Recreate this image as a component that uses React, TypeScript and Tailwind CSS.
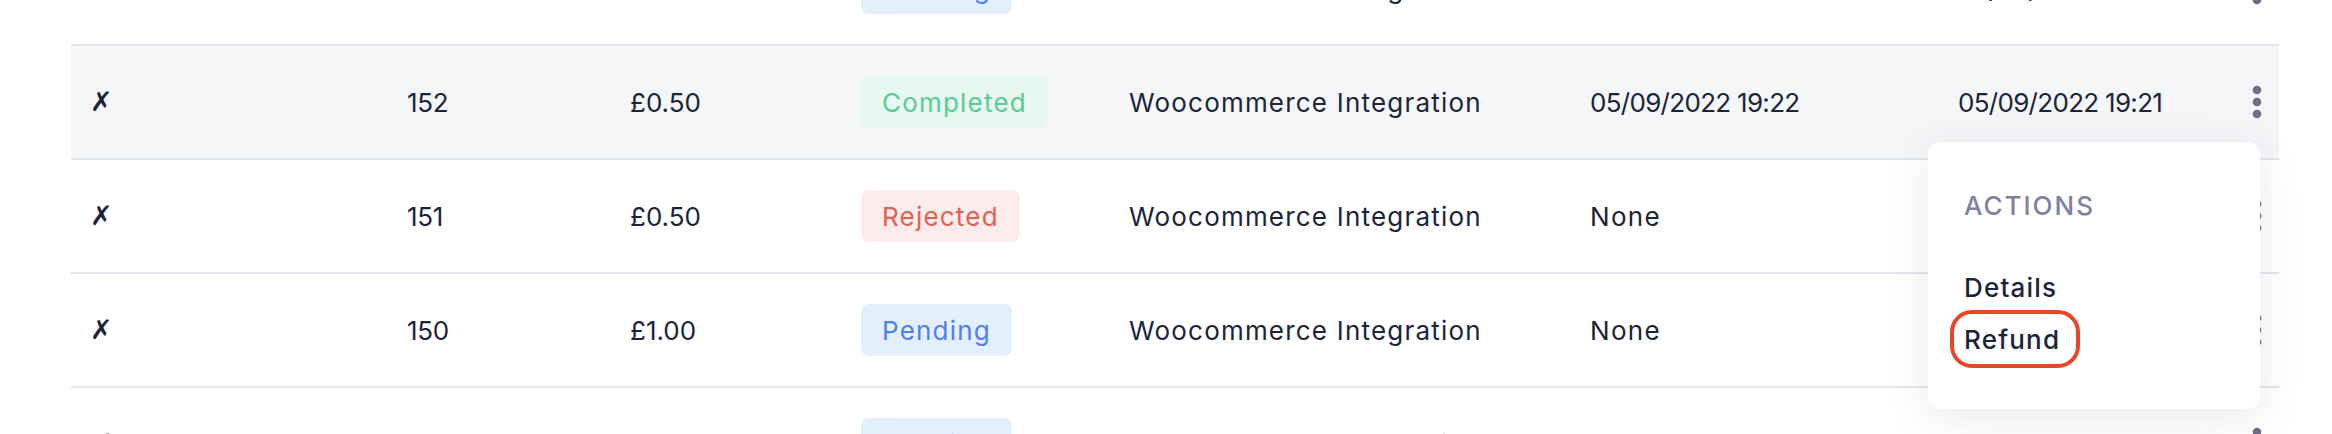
import React from "react";

type Status = "Completed" | "Rejected" | "Pending";

const rows: { id: string; amount: string; status: Status; source: string; d1: string; d2: string; hover?: boolean }[] = [
  { id: "153", amount: "£1.00", status: "Pending", source: "Woocommerce Integration", d1: "None", d2: "05/09/2022 19:20" },
  { id: "152", amount: "£0.50", status: "Completed", source: "Woocommerce Integration", d1: "05/09/2022 19:22", d2: "05/09/2022 19:21", hover: true },
  { id: "151", amount: "£0.50", status: "Rejected", source: "Woocommerce Integration", d1: "None", d2: "05/09/2022 19:19" },
  { id: "150", amount: "£1.00", status: "Pending", source: "Woocommerce Integration", d1: "None", d2: "05/09/2022 19:18" },
  { id: "149", amount: "£1.00", status: "Pending", source: "Woocommerce Integration", d1: "None", d2: "05/09/2022 19:17" },
];

function Pill({ status }: { status: Status }) {
  const cls =
    status === "Completed"
      ? "bg-[#e6f8f0] text-[#5bcb94]"
      : status === "Rejected"
      ? "bg-[#fcecec] text-[#e2614f]"
      : "bg-[#e3effc] text-[#4f80ee]";
  return (
    <span className={`inline-flex h-[52px] items-center rounded-[8px] px-[21px] tracking-[1.2px] ${cls}`}>{status}</span>
  );
}

function Kebab() {
  return (
    <svg width="10" height="34" viewBox="0 0 10 34" className="block">
      <circle cx="5" cy="5" r="4.3" fill="#6d6d87" />
      <circle cx="5" cy="17" r="4.3" fill="#6d6d87" />
      <circle cx="5" cy="29" r="4.3" fill="#6d6d87" />
    </svg>
  );
}

function DateText({ v }: { v: string }) {
  return <span className={v === "None" ? "tracking-[1.3px]" : "tracking-[-0.7px]"}>{v}</span>;
}

export default function App() {
  return (
    <div
      className="relative h-[434px] w-[2332px] overflow-hidden bg-white text-[26px] text-[#1b2439]"
      style={{ fontFamily: "Inter, 'Noto Sans', sans-serif" }}
    >
      <div className="-mt-[68px] pl-[71px] pr-[53px]">
        {rows.map((r) => (
          <div
            key={r.id}
            className={`grid h-[114px] grid-cols-[316px_223px_231px_268px_461px_368px_1fr] items-center border-b-2 border-[#e1e6ee] ${
              r.hover ? "bg-[#f5f6f8]" : ""
            }`}
          >
            <div className="pl-[19px]" style={{ fontFamily: "'DejaVu Sans', sans-serif" }}>
              <span className="text-[27px] font-bold">✗</span>
            </div>
            <div className="pl-[20px] tracking-[-0.3px]">{r.id}</div>
            <div className="pl-[20px]">{r.amount}</div>
            <div className="pl-[20px]">
              <Pill status={r.status} />
            </div>
            <div className="pl-[20px] tracking-[1.2px]">{r.source}</div>
            <div className="pl-[20px]">
              <DateText v={r.d1} />
            </div>
            <div className="flex items-center justify-between pl-[20px] pr-[17px]">
              <DateText v={r.d2} />
              <Kebab />
            </div>
          </div>
        ))}
      </div>

      <div className="absolute left-[1928px] top-[142px] flex h-[267px] w-[332px] flex-col rounded-[12px] bg-white pl-[36px] pt-[43px] shadow-[0_10px_44px_rgba(40,45,80,0.10)]">
        <div className="flex h-[40px] items-center font-medium uppercase tracking-[2px] text-[#8181a3]">Actions</div>
        <div className="mt-[42px] flex h-[40px] items-center font-medium tracking-[1.2px]">Details</div>
        <div className="-ml-[14px] mt-[3px] flex h-[58px] w-[130px] items-center rounded-[22px] border-[4px] border-[#e8462a] pl-[10px] font-medium tracking-[1.2px]">
          Refund
        </div>
      </div>
    </div>
  );
}
